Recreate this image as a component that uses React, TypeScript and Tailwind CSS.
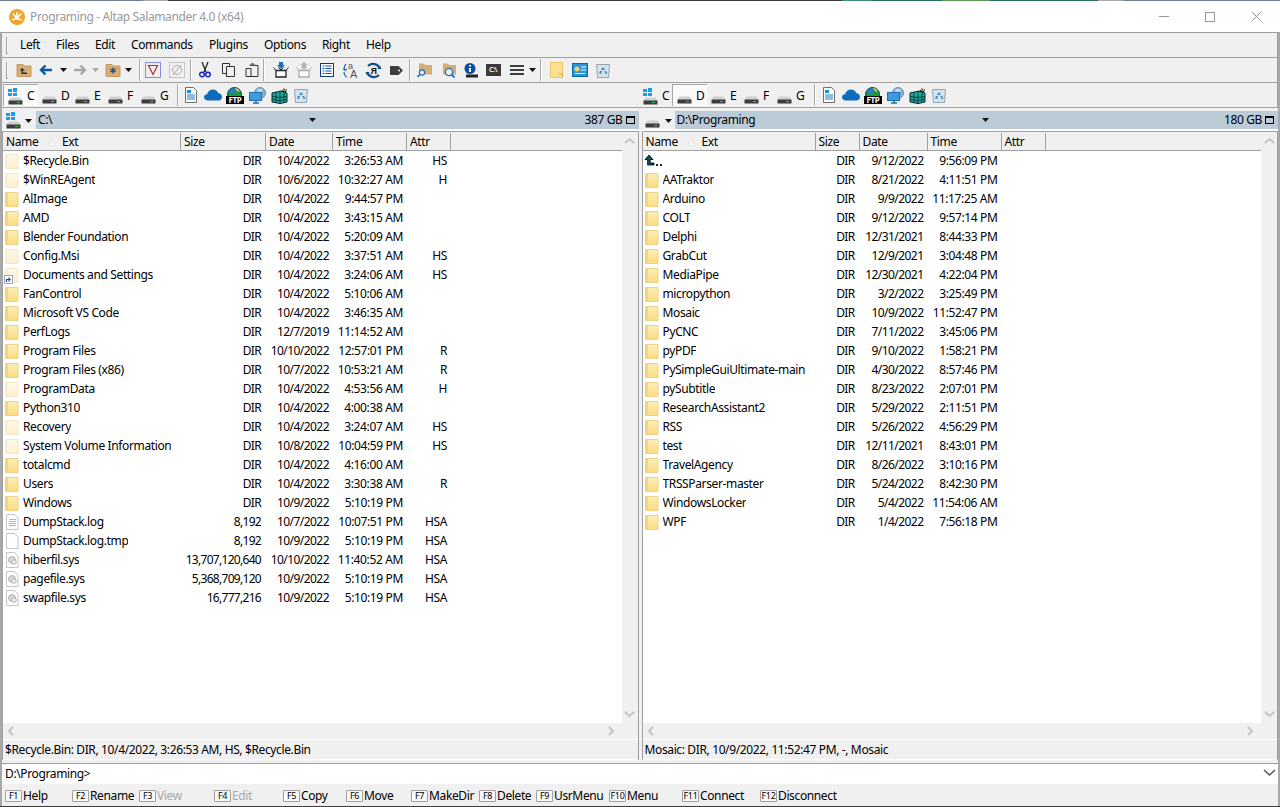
import React from "react";

const F = "font-['Open_Sans','Noto_Sans',sans-serif]";

type Row = [string, string, string, string, string, string?];

const LEFT: Row[] = [
  ["h", "$Recycle.Bin", "DIR", "10/4/2022", "3:26:53 AM", "HS"],
  ["h", "$WinREAgent", "DIR", "10/6/2022", "10:32:27 AM", "H"],
  ["d", "AlImage", "DIR", "10/4/2022", "9:44:57 PM"],
  ["d", "AMD", "DIR", "10/4/2022", "3:43:15 AM"],
  ["d", "Blender Foundation", "DIR", "10/4/2022", "5:20:09 AM"],
  ["h", "Config.Msi", "DIR", "10/4/2022", "3:37:51 AM", "HS"],
  ["l", "Documents and Settings", "DIR", "10/4/2022", "3:24:06 AM", "HS"],
  ["d", "FanControl", "DIR", "10/4/2022", "5:10:06 AM"],
  ["d", "Microsoft VS Code", "DIR", "10/4/2022", "3:46:35 AM"],
  ["d", "PerfLogs", "DIR", "12/7/2019", "11:14:52 AM"],
  ["d", "Program Files", "DIR", "10/10/2022", "12:57:01 PM", "R"],
  ["d", "Program Files (x86)", "DIR", "10/7/2022", "10:53:21 AM", "R"],
  ["h", "ProgramData", "DIR", "10/4/2022", "4:53:56 AM", "H"],
  ["d", "Python310", "DIR", "10/4/2022", "4:00:38 AM"],
  ["h", "Recovery", "DIR", "10/4/2022", "3:24:07 AM", "HS"],
  ["h", "System Volume Information", "DIR", "10/8/2022", "10:04:59 PM", "HS"],
  ["d", "totalcmd", "DIR", "10/4/2022", "4:16:00 AM"],
  ["d", "Users", "DIR", "10/4/2022", "3:30:38 AM", "R"],
  ["d", "Windows", "DIR", "10/9/2022", "5:10:19 PM"],
  ["t", "DumpStack.log", "8,192", "10/7/2022", "10:07:51 PM", "HSA"],
  ["b", "DumpStack.log.tmp", "8,192", "10/9/2022", "5:10:19 PM", "HSA"],
  ["s", "hiberfil.sys", "13,707,120,640", "10/10/2022", "11:40:52 AM", "HSA"],
  ["s", "pagefile.sys", "5,368,709,120", "10/9/2022", "5:10:19 PM", "HSA"],
  ["s", "swapfile.sys", "16,777,216", "10/9/2022", "5:10:19 PM", "HSA"],
];

const RIGHT: Row[] = [
  ["u", "", "DIR", "9/12/2022", "9:56:09 PM"],
  ["d", "AATraktor", "DIR", "8/21/2022", "4:11:51 PM"],
  ["d", "Arduino", "DIR", "9/9/2022", "11:17:25 AM"],
  ["d", "COLT", "DIR", "9/12/2022", "9:57:14 PM"],
  ["d", "Delphi", "DIR", "12/31/2021", "8:44:33 PM"],
  ["d", "GrabCut", "DIR", "12/9/2021", "3:04:48 PM"],
  ["d", "MediaPipe", "DIR", "12/30/2021", "4:22:04 PM"],
  ["d", "micropython", "DIR", "3/2/2022", "3:25:49 PM"],
  ["d", "Mosaic", "DIR", "10/9/2022", "11:52:47 PM"],
  ["d", "PyCNC", "DIR", "7/11/2022", "3:45:06 PM"],
  ["d", "pyPDF", "DIR", "9/10/2022", "1:58:21 PM"],
  ["d", "PySimpleGuiUltimate-main", "DIR", "4/30/2022", "8:57:46 PM"],
  ["d", "pySubtitle", "DIR", "8/23/2022", "2:07:01 PM"],
  ["d", "ResearchAssistant2", "DIR", "5/29/2022", "2:11:51 PM"],
  ["d", "RSS", "DIR", "5/26/2022", "4:56:29 PM"],
  ["d", "test", "DIR", "12/11/2021", "8:43:01 PM"],
  ["d", "TravelAgency", "DIR", "8/26/2022", "3:10:16 PM"],
  ["d", "TRSSParser-master", "DIR", "5/24/2022", "8:42:30 PM"],
  ["d", "WindowsLocker", "DIR", "5/4/2022", "11:54:06 AM"],
  ["d", "WPF", "DIR", "1/4/2022", "7:56:18 PM"],
];

function Svg({ children, w = 16, h = 16 }: { children: React.ReactNode; w?: number; h?: number }) {
  return (
    <svg width={w} height={h} viewBox={`0 0 ${w} ${h}`} className="block shrink-0">
      {children}
    </svg>
  );
}

function FolderIcon({ pale }: { pale?: boolean }) {
  const id = pale ? "folder-pale" : "folder-yellow";
  return (
    <Svg w={16} h={18}>
      <defs>
        <linearGradient id={id} x1="0" y1="0" x2="0" y2="1">
          <stop offset="0" stopColor={pale ? "#fef8e6" : "#fdeeb8"} />
          <stop offset="1" stopColor={pale ? "#fcf0cf" : "#fbdc80"} />
        </linearGradient>
      </defs>
      <path d="M1.5 2.5h12.5v14H1.5z" fill={`url(#${id})`} stroke={pale ? "#f3e8c8" : "#eed28a"} />
      <path d="M2 3h2v13H2z" fill={pale ? "#fbf1d4" : "#f8d678"} />
    </Svg>
  );
}

function FileIcon({ kind }: { kind: string }) {
  return (
    <Svg w={16} h={18}>
      <path d="M2.5 1.5h8l3.5 3.5v11.5H2.5z" fill="#fff" stroke="#c4c4c4" />
      {kind === "t" && <path d="M5 6.5h7M5 8.5h7M5 10.5h7M5 12.5h7" stroke="#b4b4b4" />}
      {kind === "s" && (
        <>
          <circle cx="8" cy="9" r="3.4" fill="#dadada" stroke="#aeaeae" />
          <circle cx="10" cy="11" r="2.3" fill="#efefef" stroke="#b0b0b0" />
        </>
      )}
    </Svg>
  );
}

function LinkIcon() {
  return (
    <div className="relative w-4 h-[18px]">
      <FolderIcon pale />
      <div className="absolute left-0 bottom-0 w-[9px] h-[9px] bg-white border border-[#9aa7bd] flex items-center justify-center">
        <svg width="7" height="7" viewBox="0 0 7 7" className="block">
          <path d="M1.5 6V3.5h3M3.5 1.5l1.6 2-1.6 2" fill="none" stroke="#1d49a8" strokeWidth="1.2" />
        </svg>
      </div>
    </div>
  );
}

function UpIcon() {
  return (
    <div className="flex items-end w-4 h-[18px]">
      <svg width="22" height="14" viewBox="0 0 22 14" className="block shrink-0 mb-0.5">
        <path d="M5 1L1 5.5h2.6v5.5H10V9H6.2V5.5H9z" fill="#08555c" stroke="#000" strokeWidth="0.8" />
        <path d="M12 10h2v2h-2zM16 10h2v2h-2z" fill="#222" />
      </svg>
    </div>
  );
}

function RowIcon({ kind }: { kind: string }) {
  if (kind === "u") return <UpIcon />;
  if (kind === "l") return <LinkIcon />;
  if (kind === "d") return <FolderIcon />;
  if (kind === "h") return <FolderIcon pale />;
  return <FileIcon kind={kind} />;
}

function DriveIcon() {
  return (
    <svg width="15" height="8" viewBox="0 0 15 8" className="block shrink-0">
      <path d="M2.5 .5h10L14.5 4H.5z" fill="#d0d0d0" />
      <rect x="0.5" y="3.5" width="14" height="4" fill="#3d3d3d" />
      <rect x="9" y="5" width="3" height="1" fill="#2fd04a" />
    </svg>
  );
}

function WinLogo() {
  return (
    <svg width="9" height="8" viewBox="0 0 9 8" className="block">
      <path d="M0 1h4v3H0zM5 0h4v4H5zM0 5h4v3H0zM5 5h4v3H5z" fill="#12a0ea" />
    </svg>
  );
}

function SysDrive() {
  return (
    <div className="relative w-[16px] h-[17px] flex items-end">
      <div className="absolute left-0 top-0">
        <WinLogo />
      </div>
      <DriveIcon />
    </div>
  );
}

function Caret({ color = "#111" }: { color?: string }) {
  return (
    <svg width="7" height="4" viewBox="0 0 7 4" className="block shrink-0">
      <path d="M0 0h7L3.5 4z" fill={color} />
    </svg>
  );
}

function Sep({ h = "h-[22px]" }: { h?: string }) {
  return <div className={`w-[2px] ${h} bg-[#a8a8a8] border-r border-white shrink-0`} />;
}

function DocIcon() {
  return (
    <Svg>
      <path d="M2.5 .5h8l3 3v12h-11z" fill="#fff" stroke="#6f6f6f" />
      <path d="M4 3h4v3H4z" fill="#1c8fd8" />
      <path d="M4 8h8M4 10h8M4 12h8" stroke="#1c78b8" />
    </Svg>
  );
}
function CloudIcon() {
  return (
    <svg width="18" height="12" viewBox="0 0 18 12" className="block">
      <path d="M4 11.5C1.5 11.5 0 10 0 8.2 0 6.5 1.4 5.2 3 5.2 3.9 2.4 6.2.5 9 .5c2.4 0 4.4 1.3 5.2 3.5 2.1.2 3.8 1.9 3.8 3.9 0 2-1.6 3.6-3.6 3.6z" fill="#0f6cbd" />
    </svg>
  );
}
function FtpIcon() {
  return (
    <div className="relative w-[17px] h-[17px]">
      <svg width="17" height="17" viewBox="0 0 17 17" className="block">
        <circle cx="8.5" cy="7.5" r="7" fill="#1a9a3c" stroke="#0c3d66" />
        <path d="M3 4c3-3 7-3 10-1-1 3-4 1-5 3S4 7 3 4z" fill="#2a7bd4" />
        <path d="M9 1c2 0 4 2 5 4l-3-1z" fill="#e8d24a" />
      </svg>
      <div className={`absolute left-0 -right-px bottom-0 h-2 bg-black text-white text-[8px] leading-[8px] text-center font-bold ${F}`}>FTP</div>
    </div>
  );
}
function NetIcon() {
  return (
    <svg width="17" height="17" viewBox="0 0 17 17" className="block">
      <circle cx="11" cy="6" r="5.5" fill="#7fb0d8" stroke="#6a93b4" />
      <path d="M8 3c2-2 4-1 6 0-1 3-5 4-6 0z" fill="#c7dceb" />
      <rect x="0.5" y="5.5" width="12" height="8" fill="#3e9be0" stroke="#1f6fb0" />
      <path d="M4 16h6M7 14v2" stroke="#1f6fb0" strokeWidth="1.5" />
    </svg>
  );
}
function GridIcon() {
  return (
    <svg width="17" height="17" viewBox="0 0 17 17" className="block">
      <path d="M1 6l9-2 6 2v9l-7 1.5L1 15z" fill="#1ea8a0" stroke="#062b2b" />
      <path d="M1 9.5l8 1 7-1M1 12.5l8 1 7-1M5 5.5v10M9 4.5v12M13 5v10" stroke="#062b2b" strokeWidth="0.8" fill="none" />
      <path d="M10 5l3-4 1 2 2-1-1 3z" fill="#111" />
      <path d="M12 2l1 2 2-1" stroke="#e8d24a" fill="none" />
    </svg>
  );
}
function RecycleIcon() {
  return (
    <Svg>
      <path d="M1.5 2.5h13l-1 13h-11z" fill="#d8e2ea" stroke="#95a5b2" />
      <path d="M8 5l2 3H6zM5 9l2 0-1 3-2-.5zM11 9l1.5 2.5-2 .5-1-3z" fill="#2f8fd0" />
    </Svg>
  );
}
function ManilaFolder({ children }: { children?: React.ReactNode }) {
  return (
    <div className="relative w-4 h-4">
      <svg width="16" height="16" viewBox="0 0 16 16" className="block">
        <path d="M1 4V2.5h6L8.5 4H15v10.5H1z" fill="#d6ad76" stroke="#c49a62" />
      </svg>
      {children}
    </div>
  );
}

function ToolIcon({ n }: { n: number }) {
  switch (n) {
    case 0:
      return (
        <ManilaFolder>
          <svg width="16" height="16" viewBox="0 0 16 16" className="absolute left-0 top-0 block">
            <path d="M6 6L3.5 8.5H5.5V12H11V10.5H7V8.5H9z" fill="#333" />
          </svg>
        </ManilaFolder>
      );
    case 1:
    case 2: {
      const c = n === 1 ? "#0b5aa6" : "#a8a8a8";
      return (
        <svg width="14" height="12" viewBox="0 0 14 12" className="block">
          {n === 1 ? (
            <path d="M13 6H3M6.5 1.5L2 6l4.5 4.5" fill="none" stroke={c} strokeWidth="2.4" />
          ) : (
            <path d="M1 6h10M7.5 1.5L12 6l-4.5 4.5" fill="none" stroke={c} strokeWidth="2.4" />
          )}
        </svg>
      );
    }
    case 3:
      return (
        <ManilaFolder>
          <svg width="16" height="16" viewBox="0 0 16 16" className="absolute left-0 top-0 block">
            <path d="M8 5.5v6M5.2 7l5.6 3M10.8 7l-5.6 3" stroke="#0b4fa6" strokeWidth="1.4" />
          </svg>
        </ManilaFolder>
      );
    case 4:
      return (
        <svg width="16" height="16" viewBox="0 0 16 16" className="block">
          <rect x=".5" y=".5" width="15" height="15" fill="none" stroke="#1a2fd0" strokeDasharray="1 1" />
          <path d="M3.5 3.5h9L8 12.5z" fill="none" stroke="#b03030" strokeWidth="1.2" />
        </svg>
      );
    case 5:
      return (
        <svg width="16" height="16" viewBox="0 0 16 16" className="block">
          <rect x=".5" y=".5" width="15" height="15" fill="none" stroke="#999" strokeDasharray="1 1" />
          <circle cx="8" cy="8" r="4.5" fill="none" stroke="#aaa" />
          <path d="M4 13L12 3" stroke="#aaa" />
        </svg>
      );
    case 6:
      return (
        <svg width="12" height="16" viewBox="0 0 12 16" className="block">
          <path d="M3 0l4 10M9 0L5 10" stroke="#222" strokeWidth="1.3" />
          <circle cx="3" cy="12.5" r="2.3" fill="none" stroke="#1220c0" strokeWidth="1.4" />
          <circle cx="9" cy="12.5" r="2.3" fill="none" stroke="#1220c0" strokeWidth="1.4" />
        </svg>
      );
    case 7:
      return (
        <Svg>
          <path d="M1.5 1.5h7v10h-7z" fill="none" stroke="#333" />
          <path d="M5.5 4.5h8v10h-8z" fill="#f0f0f0" stroke="#333" />
        </Svg>
      );
    case 8:
      return (
        <Svg>
          <path d="M2 6.5h5v8H2zM7 14.5h7V3.5h-3" fill="none" stroke="#333" />
          <path d="M5.5 4V2.5h2V1h2v1.5h2V4z" fill="#555" />
        </Svg>
      );
    case 9:
    case 10: {
      const d = n === 9 ? "#222" : "#a8a8a8";
      return (
        <Svg>
          <path d="M3 8.5h10v6.5H3z" fill="#fff" stroke={d} strokeWidth="1.3" />
          <path d="M3 8.5L.5 5.5M13 8.5l2.5-3M5.5 5.5L8 8l2.5-2.5" fill="none" stroke={d} />
          {n === 9 ? (
            <path d="M6 0h4v3h2L8 7 4 3h2z" fill="#1b6fc0" />
          ) : (
            <path d="M6 6h4V3h2L8 0 4 3h2z" fill="#b5b5b5" />
          )}
        </Svg>
      );
    }
    case 11:
      return (
        <Svg>
          <rect x=".5" y="1.5" width="13" height="13" fill="#fff" stroke="#123a7a" />
          <path d="M2.5 4h2M5.5 4h6M2.5 6.5h2M5.5 6.5h6M2.5 9h2M5.5 9h6M2.5 11.5h2M5.5 11.5h6" stroke="#0f4fb0" />
        </Svg>
      );
    case 12:
      return (
        <svg width="16" height="17" viewBox="0 0 16 17" className="block">
          <text x="5" y="6.5" fontSize="9" fill="#555" fontFamily="Liberation Sans">a</text>
          <text x="7" y="16" fontSize="11" fill="#555" fontFamily="Liberation Sans">A</text>
          <path d="M3 2C1 4 1 7 2 8M0 6.5L2 8.5l2-1.5M4 15c-2-1-3-3-3-5" fill="none" stroke="#2470b0" strokeWidth="1.2" />
        </svg>
      );
    case 13:
      return (
        <svg width="17" height="17" viewBox="0 0 17 17" className="block">
          <path d="M3 4a7.2 7.2 0 0 1 12 3M14 13A7.2 7.2 0 0 1 2 10" fill="none" stroke="#124f8a" strokeWidth="2.2" />
          <path d="M12.5 7h4l-1.5-3.5zM4.5 10H.5L2 13.5z" fill="#124f8a" />
          <text x="5.5" y="12" fontSize="9" fontWeight="bold" fill="#111" fontFamily="Liberation Sans">Я</text>
        </svg>
      );
    case 14:
      return (
        <svg width="13" height="9" viewBox="0 0 13 9" className="block">
          <path d="M0 0h8.5L13 4.5 8.5 9H0z" fill="#3d3d3d" />
          <circle cx="9" cy="4.5" r="1" fill="#f0f0f0" />
        </svg>
      );
    case 15:
    case 16: {
      return (
        <svg width="16" height="16" viewBox="0 0 16 16" className="block">
          <path d="M2 3V1.5h5L8 3h7v9.5H2z" fill="#d6ad76" />
          {n === 15 ? (
            <>
              <circle cx="5" cy="10.5" r="2.6" fill="#f0f0f0" stroke="#1b6fc0" strokeWidth="1.2" />
              <path d="M3 12.5L.5 15" stroke="#1b6fc0" strokeWidth="1.6" />
            </>
          ) : (
            <>
              <circle cx="8" cy="10" r="3.6" fill="#f0f0f0" stroke="#1b6fc0" strokeWidth="1.3" />
              <path d="M10.5 12.5l3 3" stroke="#1b6fc0" strokeWidth="1.8" />
            </>
          )}
        </svg>
      );
    }
    case 17:
      return (
        <svg width="14" height="15" viewBox="0 0 14 15" className="block">
          <circle cx="6" cy="5.5" r="5.5" fill="#0b4fa0" />
          <path d="M5 2h2v1.5H5zM5 5h2v4H5z" fill="#fff" />
          <rect x="2" y="11.5" width="12" height="3" fill="#222" />
        </svg>
      );
    case 18:
      return (
        <div className={`w-[15px] h-[12px] bg-[#3a3a3a] text-white text-[7px] leading-[12px] text-center font-semibold ${F}`}>C:\</div>
      );
    case 19:
      return (
        <svg width="14" height="10" viewBox="0 0 14 10" className="block">
          <path d="M0 1h14M0 5h14M0 9h14" stroke="#3d3d3d" strokeWidth="2" />
        </svg>
      );
    case 20:
      return (
        <svg width="13" height="16" viewBox="0 0 13 16" className="block">
          <path d="M.5.5h12v15H.5z" fill="#fbe08f" stroke="#e8c86a" />
          <path d="M9 12h3.5v3.5" fill="none" stroke="#d4ac4e" />
        </svg>
      );
    case 21:
      return (
        <svg width="16" height="14" viewBox="0 0 16 14" className="block">
          <rect x=".5" y=".5" width="15" height="13" fill="#2a95da" stroke="#0d6aa8" />
          <circle cx="5" cy="6" r="2.5" fill="#f6d36a" />
          <path d="M9 4h5M9 7h5M3 10.5h10" stroke="#fff" />
        </svg>
      );
    default:
      return <RecycleIcon />;
  }
}

function Slot({ n, w, mr = "" }: { n: number; w: string; mr?: string }) {
  return (
    <div className={`${w} ${mr} shrink-0 flex items-center justify-center`}>
      <ToolIcon n={n} />
    </div>
  );
}

function Band({ children, h, cls = "" }: { children: React.ReactNode; h: string; cls?: string }) {
  return <div className={`${h} shrink-0 flex items-center border-b border-[#a0a0a0] ${cls}`}>{children}</div>;
}

const gripper = <div className="w-[2px] h-[17px] border-l border-[#a0a0a0] border-b bg-white/60 shrink-0" />;

function Menu() {
  const items: [string, string][] = [
    ["Left", "w-[36px]"],
    ["Files", "w-[39px]"],
    ["Edit", "w-[36px]"],
    ["Commands", "w-[78px]"],
    ["Plugins", "w-[55px]"],
    ["Options", "w-[58px]"],
    ["Right", "w-[44px]"],
    ["Help", "w-[40px]"],
  ];
  return (
    <Band h="h-[25px]" cls="pl-[4px]">
      {gripper}
      <div className="flex ml-[12px]">
        {items.map(([t, w]) => (
          <div key={t} className={w}>
            {t}
          </div>
        ))}
      </div>
    </Band>
  );
}

function Toolbar() {
  return (
    <Band h="h-[25px]" cls="pl-[4px]">
      {gripper}
      <div className="flex items-center ml-[5px]">
        <Slot n={0} w="w-[22px]" />
        <Slot n={1} w="w-[22px]" mr="mr-[11px]" />
        <div className="-ml-[8px] w-[8px] mr-[3px]">
          <Caret />
        </div>
        <Slot n={2} w="w-[18px]" />
        <div className="w-[7px] ml-[3px] mr-[6px]">
          <Caret color="#a8a8a8" />
        </div>
        <Slot n={3} w="w-[16px]" />
        <div className="w-[7px] ml-[4px] mr-[7px]">
          <Caret />
        </div>
        <Sep />
        <Slot n={4} w="w-[26px]" mr="ml-[-1px]" />
        <Slot n={5} w="w-[22px]" />
        <div className="w-[2px]" />
        <Sep />
        <Slot n={6} w="w-[26px]" />
        <Slot n={7} w="w-[22px]" />
        <Slot n={8} w="w-[23px]" />
        <Sep />
        <Slot n={9} w="w-[26px]" mr="ml-[3px]" />
        <Slot n={10} w="w-[20px]" />
        <Slot n={11} w="w-[25px]" mr="ml-[1px]" />
        <Slot n={12} w="w-[21px]" />
        <Slot n={13} w="w-[24px]" />
        <Slot n={14} w="w-[22px]" />
        <div className="w-[2px]" />
        <Sep />
        <Slot n={15} w="w-[27px]" />
        <Slot n={16} w="w-[22px]" />
        <Slot n={17} w="w-[22px]" />
        <Slot n={18} w="w-[22px]" />
        <Slot n={19} w="w-[25px]" />
        <div className="w-[7px]">
          <Caret />
        </div>
        <div className="w-[4px]" />
        <Sep />
        <Slot n={20} w="w-[28px]" />
        <Slot n={21} w="w-[20px]" />
        <Slot n={22} w="w-[26px]" />
      </div>
    </Band>
  );
}

function DriveButton({ letter, sys, active, w }: { letter: string; sys?: boolean; active?: boolean; w: string }) {
  return (
    <div
      className={`${w} h-[22px] shrink-0 flex items-end pb-[1px] pl-[4px] ${
        active ? "bg-[#fafafa] border-t border-l border-[#a8a8a8]" : ""
      }`}
    >
      {sys ? <SysDrive /> : <div className="mb-[1px] w-[16px]"><DriveIcon /></div>}
      <span className="ml-[3px] leading-[18px]">{letter}</span>
    </div>
  );
}

function ShortcutIcons() {
  return (
    <div className="flex items-center">
      <div className="w-[23px] flex justify-center"><DocIcon /></div>
      <div className="w-[21px] flex justify-center"><CloudIcon /></div>
      <div className="w-[23px] flex justify-center"><FtpIcon /></div>
      <div className="w-[22px] flex justify-center"><NetIcon /></div>
      <div className="w-[22px] flex justify-center"><GridIcon /></div>
      <div className="w-[22px] flex justify-center"><RecycleIcon /></div>
    </div>
  );
}

function DriveBar() {
  return (
    <Band h="h-[25px]">
      <div className="w-[636px] flex items-center pl-[1px]">
        <DriveButton letter="C" sys active w="w-[35px]" />
        <DriveButton letter="D" w="w-[33px]" />
        <DriveButton letter="E" w="w-[33px]" />
        <DriveButton letter="F" w="w-[33px]" />
        <DriveButton letter="G" w="w-[40px]" />
        <Sep />
        <ShortcutIcons />
      </div>
      <div className="flex-1 flex items-center pl-[1px]">
        <DriveButton letter="C" sys w="w-[33px]" />
        <DriveButton letter="D" active w="w-[35px]" />
        <DriveButton letter="E" w="w-[33px]" />
        <DriveButton letter="F" w="w-[33px]" />
        <DriveButton letter="G" w="w-[41px]" />
        <Sep />
        <div className="ml-[1px]"><ShortcutIcons /></div>
      </div>
    </Band>
  );
}

function Chev({ dir }: { dir: "up" | "down" | "left" | "right" }) {
  const d = {
    up: "M1 7l4.5-4 4.5 4",
    down: "M1 3l4.5 4 4.5-4",
    left: "M7 1L3 5l4 4",
    right: "M3 1l4 4-4 4",
  }[dir];
  return (
    <svg width="11" height="10" viewBox="0 0 11 10" className="block">
      <path d={d} fill="none" stroke="#c4c4c4" strokeWidth="2" />
    </svg>
  );
}

function Panel({
  side,
  rows,
  path,
  free,
  status,
  nameW,
  sizeW,
}: {
  side: "l" | "r";
  rows: Row[];
  path: string;
  free: string;
  status: string;
  nameW: string;
  sizeW: string;
}) {
  const isL = side === "l";
  const dateW = isL ? "w-[67px]" : "w-[68px]";
  return (
    <div className="flex-1 min-w-0 flex flex-col">
      <div className="h-[2px] shrink-0" />
      <div className="h-[19px] shrink-0 flex items-center">
        <div className={`${isL ? "w-[34px] pl-[4px]" : "w-[33px] pl-[3px]"} h-[18px] flex items-end shrink-0`}>
          {isL ? <SysDrive /> : <div className="mb-[1px]"><DriveIcon /></div>}
          <div className={`${isL ? "ml-[3px]" : "ml-[5px]"} mb-[6px]`}>
            <Caret />
          </div>
        </div>
        <div className="flex-1 min-w-0 h-[18px] bg-[#bccbd8] flex items-center relative pl-[2px] pr-[4px]">
          <span className="flex-1">{path}</span>
          <div className={`absolute top-[7px] ${isL ? "left-[273px]" : "left-[307px]"}`}>
            <Caret />
          </div>
          <span className="mr-[3px]">{free}</span>
          <div className="w-[9px] h-[8px] border border-black border-t-2" />
        </div>
      </div>
      <div className="h-[2px] bg-white shrink-0" />
      <div className="flex-1 min-h-0 flex flex-col border-t border-l border-r border-[#a0a0a0]">
        <div className="flex-1 min-h-0 flex">
          <div className="flex-1 min-w-0 flex flex-col">
            <div className="h-[19px] shrink-0 flex items-center border-b border-[#a0a0a0] bg-[#f0f0f0] pt-[1px]">
              <div className={`${nameW} h-full flex items-center pl-[3px] border-r border-[#a0a0a0]`}>
                <span className="w-[41px]">Name</span>
                <span className="w-[15px] text-white text-[9px] leading-none [text-shadow:0_0_1px_#999]">▲</span>
                <span>Ext</span>
              </div>
              <div className={`${sizeW} h-full flex items-center pl-[3px] border-r border-[#a0a0a0]`}>Size</div>
              <div className={`${dateW} h-full flex items-center pl-[3px] border-r border-[#a0a0a0]`}>Date</div>
              <div className="w-[74px] h-full flex items-center pl-[3px] border-r border-[#a0a0a0]">Time</div>
              <div className="w-[44px] h-full flex items-center pl-[3px] border-r border-[#a0a0a0]">Attr</div>
            </div>
            <div className="flex-1 min-h-0 bg-white">
              {rows.map((r, i) => (
                <div key={i} className="h-[19px] flex items-center">
                  <div className={`${nameW} shrink-0 flex items-center pl-[1px]`}>
                    <div className="w-[19px] shrink-0">
                      <RowIcon kind={r[0]} />
                    </div>
                    <span className="truncate">{r[1]}</span>
                  </div>
                  <div className={`${sizeW} shrink-0 text-right pr-[5px] tracking-[-0.7px]`}>{r[2]}</div>
                  <div className={`${dateW} shrink-0 text-right pr-[4px] whitespace-nowrap tracking-[-0.55px]`}>{r[3]}</div>
                  <div className="w-[74px] shrink-0 text-right pr-[4px] whitespace-nowrap">{r[4]}</div>
                  <div className="w-[44px] shrink-0 text-right pr-[4px]">{r[5]}</div>
                </div>
              ))}
            </div>
          </div>
          <div className="w-[16px] shrink-0 flex flex-col items-center justify-between pt-[4px] pb-[4px]">
            <Chev dir="up" />
            <Chev dir="down" />
          </div>
        </div>
        <div className="h-[17px] shrink-0 flex items-center justify-between border-b border-white pl-[3px] pr-[21px]">
          <Chev dir="left" />
          <Chev dir="right" />
        </div>
        <div className="h-[20px] shrink-0 flex items-center pl-[2px] border-b border-white leading-none">{status}</div>
      </div>
    </div>
  );
}

const FKEYS: [string, string, string, boolean?][] = [
  ["F1", "Help", "w-[67px]"],
  ["F2", "Rename", "w-[67px]"],
  ["F3", "View", "w-[75px]", true],
  ["F4", "Edit", "w-[69px]", true],
  ["F5", "Copy", "w-[63px]"],
  ["F6", "Move", "w-[65px]"],
  ["F7", "MakeDir", "w-[68px]"],
  ["F8", "Delete", "w-[57px]"],
  ["F9", "UsrMenu", "w-[73px]"],
  ["F10", "Menu", "w-[73px]"],
  ["F11", "Connect", "w-[78px]"],
  ["F12", "Disconnect", "w-[90px]"],
];

function FKeyBar() {
  return (
    <div className="flex-1 min-h-0 flex items-center pl-[3px] pt-[1px]">
      {FKEYS.map(([k, t, w, dis]) => (
        <div key={k} className={`${w} shrink-0 flex items-center`}>
          <div className="w-[17px] h-[12px] shrink-0 border border-[#a0a0a0] rounded-[1px] bg-[#f8f8f8] text-[9px] leading-[10px] text-center">
            {k}
          </div>
          <span className={`ml-[1px] ${dis ? "text-[#a8a8a8]" : ""}`}>{t}</span>
        </div>
      ))}
    </div>
  );
}

function TopEdge() {
  return (
    <div className="h-px shrink-0 flex">
      <div className="w-[143px] bg-[#6f7f95]" />
      <div className="w-[25px] bg-[#a8a8a8]" />
      <div className="w-[674px] bg-[#3a3a3a]" />
      <div className="w-[30px] bg-[#3a8a7a]" />
      <div className="w-[70px] bg-[#2a7060]" />
      <div className="w-[48px] bg-[#5a9a50]" />
      <div className="w-[108px] bg-[#2a7060]" />
      <div className="w-[25px] bg-[#a8a8a8]" />
      <div className="flex-1 bg-[#6f7f95]" />
    </div>
  );
}

export default function App() {
  return (
    <div className={`w-[1280px] h-[807px] overflow-hidden bg-[#f0f0f0] text-black text-[12px] leading-[16px] tracking-[-0.37px] flex flex-col border-b border-b-[#3c3c3c] ${F}`}>
      <TopEdge />
      <div className="h-[31px] shrink-0 bg-white flex items-center">
        <div className="ml-[9px] w-4 h-4 shrink-0">
          <svg width="16" height="16" viewBox="0 0 16 16" className="block">
            <circle cx="8" cy="8" r="8" fill="#f0a428" />
            <path d="M8 9.5L4 4.5M8 9.5l4-5M8 9.5V3M8 9.5L3 11M8 9.5l5 1.5" stroke="#fff" strokeWidth="1.6" />
          </svg>
        </div>
        <div className="ml-[5px] text-[#9a9a9a]">Programing - Altap Salamander 4.0 (x64)</div>
        <div className="flex-1" />
        <div className="w-[46px] flex justify-center">
          <div className="w-[10px] h-px bg-[#999]" />
        </div>
        <div className="w-[46px] flex justify-center">
          <div className="w-[10px] h-[10px] border border-[#999]" />
        </div>
        <div className="w-[46px] flex justify-center mr-[1px]">
          <svg width="11" height="11" viewBox="0 0 11 11" className="block">
            <path d="M.5.5l10 10M10.5.5l-10 10" stroke="#999" />
          </svg>
        </div>
      </div>
      <div className="flex-1 min-h-0 flex flex-col border-l-2 border-[#a8a8a8] border-r-2">
        <div className="border-t border-[#a0a0a0] shrink-0 flex flex-col border-r">
          <Menu />
          <Toolbar />
          <DriveBar />
        </div>
        <div className="h-[652px] shrink-0 flex gap-[3px]">
          <Panel side="l" rows={LEFT} path="C:\" free="387 GB" status="$Recycle.Bin: DIR, 10/4/2022, 3:26:53 AM, HS, $Recycle.Bin" nameW="w-[178px]" sizeW="w-[85px]" />
          <Panel side="r" rows={RIGHT} path="D:\Programing" free="180 GB" status="Mosaic: DIR, 10/9/2022, 11:52:47 PM, -, Mosaic" nameW="w-[173px]" sizeW="w-[44px]" />
        </div>
        <div className="h-[3px] shrink-0" />
        <div className="h-[21px] shrink-0 bg-white border-t border-[#a0a0a0] flex items-center pl-[3px] relative">
          D:\Programing&gt;
          <div className="absolute right-[2px] top-[5px]">
            <svg width="13" height="8" viewBox="0 0 13 8" className="block">
              <path d="M1 1l5.5 5L12 1" fill="none" stroke="#555" strokeWidth="1.5" />
            </svg>
          </div>
        </div>
        <FKeyBar />
      </div>
    </div>
  );
}
